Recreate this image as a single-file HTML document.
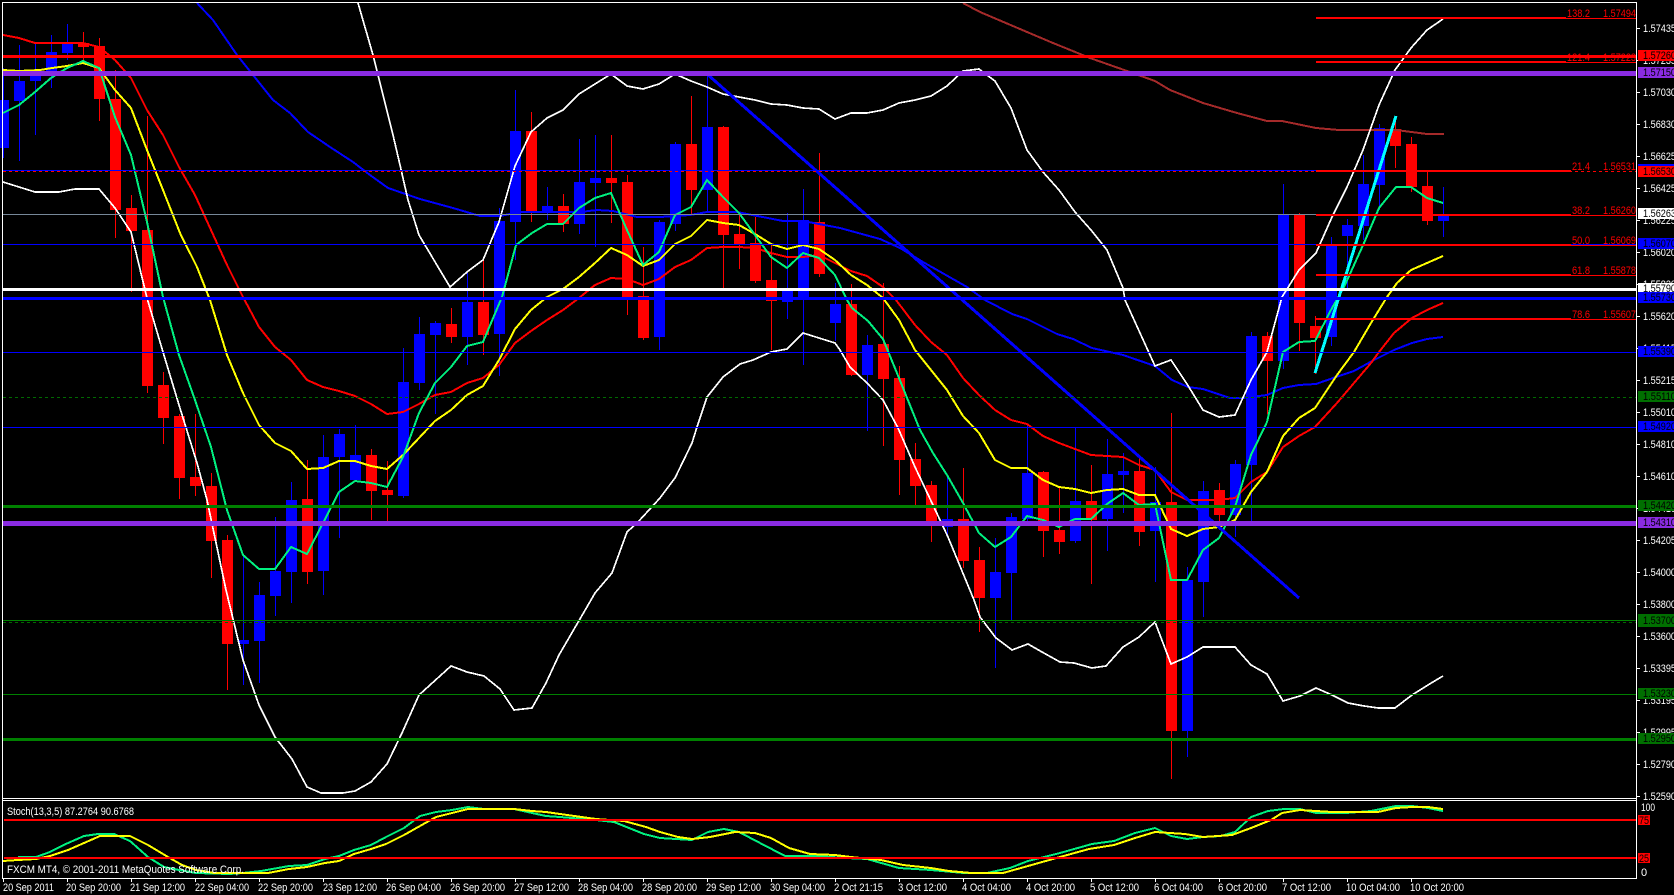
<!DOCTYPE html>
<html><head><meta charset="utf-8"><title>FXCM MT4 chart</title>
<style>
html,body{margin:0;padding:0;background:#000;width:1674px;height:895px;overflow:hidden}
svg{display:block;position:absolute;left:0;top:0}
text{font-family:"Liberation Sans",sans-serif;font-size:11px;fill:#fff;shape-rendering:auto}
.f text{fill:#f00}
.l text{fill:#000}
polyline,path{fill:none}
</style></head><body>
<svg width="1674" height="895" viewBox="0 0 1674 895" shape-rendering="crispEdges">
<rect width="1674" height="895" fill="#000"/>
<!-- wicks -->
<path stroke="#00f" stroke-width="1" d="M3.5 68V158M19.5 45V161M35.5 43V135M51.5 35V88M67.5 24V60M243.5 555V685M259.5 582V683M275.5 517V616M291.5 482V603M323.5 435V595M339.5 429V538M355.5 425V482M403.5 348V498M419.5 317V390M435.5 321V414M467.5 273V365M499.5 208V376M515.5 90V260M547.5 187V220M579.5 139V234M595.5 135V247M659.5 220V350M675.5 142V231M707.5 75V213M787.5 213V319M803.5 189V365M835.5 283V341M867.5 335V431M947.5 475V537M995.5 538V668M1011.5 513V620M1027.5 425V525M1075.5 428V543M1107.5 439V551M1123.5 453V513M1155.5 467V582M1187.5 567V757M1203.5 481V617M1235.5 460V537M1251.5 332V521M1283.5 184V369M1331.5 237V346M1347.5 219V290M1363.5 155V240M1379.5 124V210M1443.5 187V237"/>
<path stroke="#f00" stroke-width="1" d="M83.5 32V60M99.5 38V121M115.5 70V238M131.5 195V292M147.5 116V393M163.5 372V444M179.5 414V499M195.5 414V496M211.5 473V578M227.5 535V690M307.5 460V584M371.5 449V520M387.5 461V522M451.5 308V343M483.5 260V355M531.5 112V222M563.5 194V232M611.5 135V223M627.5 175V315M643.5 247V340M691.5 96V215M723.5 126V288M739.5 213V269M755.5 217V283M771.5 245V350M819.5 153V277M851.5 284V376M883.5 283V446M899.5 366V495M915.5 443V505M931.5 481V542M963.5 468V568M979.5 547V632M1043.5 471V557M1059.5 488V554M1091.5 465V584M1139.5 458V546M1171.5 413V779M1219.5 483V530M1267.5 332V414M1299.5 213V351M1315.5 316V374M1395.5 120V168M1411.5 137V192M1427.5 171V225"/>
<!-- bodies -->
<path stroke="#00f" stroke-width="11" d="M3.5 100V148M19.5 81V101M35.5 70V81M51.5 52V72M67.5 44V53M243.5 640V644M259.5 595V641M275.5 571V596M291.5 500V572M323.5 457V571M339.5 434V457M355.5 455V480M403.5 382V496M419.5 334V383M435.5 323V335M467.5 302V337M499.5 221V334M515.5 131V222M547.5 206V212M579.5 182V224M595.5 178V183M659.5 222V337M675.5 144V224M707.5 127V190M787.5 291V302M803.5 220V298M835.5 304V323M867.5 345V375M947.5 519V527M995.5 572V598M1011.5 517V573M1027.5 473V519M1075.5 501V541M1107.5 474V519M1123.5 471V475M1155.5 502V531M1187.5 580V731M1203.5 491V582M1235.5 464V515M1251.5 336V465M1283.5 215V361M1331.5 245V337M1347.5 225V236M1363.5 184V226M1379.5 128V185M1443.5 216V221"/>
<path stroke="#f00" stroke-width="11" d="M83.5 43V47M99.5 46V99M115.5 99V210M131.5 208V231M147.5 230V386M163.5 385V418M179.5 416V478M195.5 477V486M211.5 486V541M227.5 540V644M307.5 499V572M371.5 455V491M387.5 490V495M451.5 324V337M483.5 302V335M531.5 131V212M563.5 206V224M611.5 178V183M627.5 182V298M643.5 296V338M691.5 144V190M723.5 127V235M739.5 234V244M755.5 243V281M771.5 280V301M819.5 222V274M851.5 304V375M883.5 344V379M899.5 378V460M915.5 459V486M931.5 485V521M963.5 519V561M979.5 560V598M1043.5 472V531M1059.5 530V542M1091.5 501V520M1139.5 471V532M1171.5 502V731M1219.5 490V515M1267.5 336V361M1299.5 215V323M1315.5 326V338M1395.5 129V146M1411.5 144V187M1427.5 186V221"/>
<!-- brown MA -->
<polyline stroke="#a52a2a" stroke-width="2" points="963,3 980,12 1027,32 1053,43 1090,58 1127,71 1155,81 1170,90 1203,103 1237,113 1267,121 1282,121 1316,128 1339,130 1396,130 1427,134 1444,134" />
<!-- blue MA -->
<polyline stroke="#00f" stroke-width="2" points="197,3 213,20 237,55 253,75 273,100 290,113 308,132 330,147 353,162 370,175 388,188 420,199 453,208 480,216 500,216 520,212 580,212 597,210 613,211 637,217 660,217 690,215 707,212 737,212 783,221 803,221 840,228 880,239 900,248 923,262 967,287 985,300 1012,314 1027,319 1057,334 1073,339 1092,348 1123,355 1155,366 1172,380 1188,387 1203,389 1230,398 1243,398 1267,395 1283,388 1299,385 1316,384 1336,377 1354,371 1374,360 1394,350 1412,343 1427,339 1443,337"/>
<!-- red EMA -->
<polyline stroke="#f00" stroke-width="2" points="3,35 19,38 35,43 51,43 67,43 83,43 99,47 115,60 131,78 147,110 163,135 179,167 195,195 211,230 227,265 243,297 259,327 275,347 291,360 307,380 323,387 339,391 355,396 371,404 387,414 403,412 419,404 435,395 451,392 467,383 483,378 499,365 515,343 531,331 547,320 563,310 579,298 595,285 611,278 627,279 643,285 659,279 675,267 691,260 707,248 723,247 739,247 755,248 771,253 787,257 803,257 819,255 835,263 851,271 867,276 883,287 896,300 915,325 931,342 947,355 963,378 979,395 995,410 1011,420 1027,424 1043,436 1059,443 1075,449 1091,455 1107,456 1123,457 1139,465 1155,470 1171,492 1187,500 1203,500 1219,500 1235,498 1251,482 1267,472 1283,447 1299,436 1315,427 1337,403 1354,383 1371,363 1379,352 1394,333 1412,318 1427,310 1443,303"/>
<!-- yellow EMA -->
<polyline stroke="#ff0" stroke-width="2" points="3,70 19,71 40,70 52,68 67,66 83,63 99,68 115,90 131,108 147,150 163,190 180,233 197,267 210,300 227,355 243,393 259,425 275,443 291,451 307,469 323,468 339,461 355,461 371,466 387,469 403,455 419,438 435,421 451,410 467,395 483,386 499,360 515,329 531,310 547,297 563,289 579,277 595,263 611,248 627,255 643,266 659,260 675,244 691,236 707,220 723,223 739,225 755,234 771,244 787,249 803,245 819,249 835,260 851,275 867,285 883,298 899,320 915,350 931,370 947,390 963,416 979,433 995,460 1011,468 1027,468 1043,480 1059,487 1075,489 1091,493 1107,490 1123,489 1139,495 1155,495 1171,529 1187,536 1203,529 1219,527 1235,520 1251,492 1267,472 1283,436 1299,418 1315,408 1337,375 1354,352 1371,323 1387,297 1397,283 1411,270 1427,263 1443,256"/>
<!-- white bands -->
<polyline stroke="#fff" stroke-width="1.7" points="3,182 19,187 35,192 59,192 75,189 99,189 115,208 131,232 147,298 163,352 179,405 197,463 207,500 226,590 243,660 259,705 275,737 292,759 307,787 321,793 343,793 355,791 371,782 387,764 402,733 419,695 451,666 467,672 484,676 500,689 514,710 532,708 546,683 559,655 591,600 595,593 612,573 627,532 638,522 660,498 675,478 692,443 697,427 707,397 723,377 740,364 753,360 771,352 787,349 803,333 835,343 840,350 850,367 867,383 883,400 898,428 915,467 932,503 948,537 974,600 980,617 996,638 1012,650 1028,644 1042,652 1060,662 1074,663 1092,668 1106,666 1123,647 1139,637 1155,622 1171,664 1187,657 1203,647 1235,647 1251,665 1267,674 1283,701 1300,696 1316,688 1332,695 1348,703 1364,706 1378,708 1395,708 1412,695 1428,685 1443,676"/>
<polyline stroke="#fff" stroke-width="1.7" points="358,3 373,55 378,75 393,135 400,165 408,200 419,235 450,287 467,272 483,260 499,222 515,166 531,132 547,118 563,110 579,94 595,84 611,74 627,86 643,89 659,84 675,74 691,81 707,87 723,94 739,97 755,100 771,104 787,105 803,108 819,109 835,119 851,113 867,113 883,110 899,103 915,100 931,96 947,86 963,71 979,69 995,81 1011,108 1027,150 1043,172 1059,190 1075,212 1091,230 1107,250 1123,288 1125,300 1140,333 1155,366 1171,360 1187,384 1203,410 1219,417 1235,415 1251,380 1267,352 1282,297 1299,270 1316,253 1332,217 1347,187 1363,150 1379,105 1395,70 1411,48 1427,30 1443,19"/>
<!-- green EMA -->
<polyline stroke="#00f080" stroke-width="2" points="3,113 19,105 35,92 51,78 67,68 83,61 99,68 115,117 131,155 147,222 163,297 179,355 195,400 211,447 227,510 243,555 259,569 275,569 291,547 307,554 323,523 339,492 355,481 371,483 387,487 403,457 419,413 435,383 451,367 467,346 483,342 502,297 516,245 532,233 547,224 563,224 579,208 595,198 611,193 627,230 643,265 659,252 675,215 691,207 707,180 723,197 739,213 755,235 771,257 787,268 803,253 819,258 835,275 847,300 852,308 868,321 883,339 899,378 920,430 933,453 947,475 963,503 979,533 995,547 1011,537 1027,516 1043,520 1059,527 1075,519 1091,519 1107,504 1123,493 1139,505 1155,504 1171,580 1187,580 1203,550 1219,538 1235,507 1251,455 1267,422 1283,352 1299,342 1315,341 1331,310 1344,287 1364,243 1379,208 1396,187 1411,187 1427,198 1443,203"/>
<!-- trend lines -->
<path stroke="#00f" stroke-width="3" d="M707 74L1299 598"/>
<path stroke="#0ff" stroke-width="3" d="M1315 373L1396 116"/>
<!-- horizontal lines -->
<path stroke="#f00" stroke-width="3" d="M3 56.5H1636"/>
<path stroke="#8a2be2" stroke-width="5" d="M3 73.5H1636M3 523.5H1636"/>
<path stroke="#00f" stroke-width="1" d="M3 170.5H1316M3 244.5H1636M3 352.5H1636M3 427.5H1636"/>
<path stroke="#f00" stroke-width="1" stroke-dasharray="3 3" d="M3 171.5H1636"/>
<path stroke="#778899" stroke-width="1" d="M3 214.5H1320"/>
<path stroke="#fff" stroke-width="3" d="M3 289.5H1636"/>
<path stroke="#00f" stroke-width="3" d="M3 298.5H1636"/>
<path stroke="#006a00" stroke-width="1" stroke-dasharray="3 3" d="M3 397.5H1636M3 622.5H1636"/>
<path stroke="#008000" stroke-width="3" d="M3 506.5H1636M3 739.5H1636"/>
<path stroke="#008000" stroke-width="1" d="M3 620.5H1636M3 694.5H1636"/>
<!-- fib -->
<path stroke="#f00" stroke-width="2" d="M1316 18H1566M1316 62H1566M1316 171H1571M1316 215H1571M1316 245H1571M1316 275H1571M1316 319H1571"/>
<path stroke="#f00" stroke-width="1" d="M1566 18.5H1636M1566 62.5H1636M1571 215.5H1636M1571 245.5H1636M1571 275.5H1636M1571 319.5H1636"/>
<g class="f">
<text x="1567" y="17" textLength="23" lengthAdjust="spacingAndGlyphs">138.2</text><text x="1603" y="17" textLength="33" lengthAdjust="spacingAndGlyphs">1.57494</text>
<text x="1567" y="61" textLength="23" lengthAdjust="spacingAndGlyphs">121.4</text><text x="1603" y="61" textLength="33" lengthAdjust="spacingAndGlyphs">1.57223</text>
<text x="1572" y="170" textLength="18" lengthAdjust="spacingAndGlyphs">21.4</text><text x="1603" y="170" textLength="33" lengthAdjust="spacingAndGlyphs">1.56531</text>
<text x="1572" y="214" textLength="18" lengthAdjust="spacingAndGlyphs">38.2</text><text x="1603" y="214" textLength="33" lengthAdjust="spacingAndGlyphs">1.56260</text>
<text x="1572" y="244" textLength="18" lengthAdjust="spacingAndGlyphs">50.0</text><text x="1603" y="244" textLength="33" lengthAdjust="spacingAndGlyphs">1.56069</text>
<text x="1572" y="274" textLength="18" lengthAdjust="spacingAndGlyphs">61.8</text><text x="1603" y="274" textLength="33" lengthAdjust="spacingAndGlyphs">1.55878</text>
<text x="1572" y="318" textLength="18" lengthAdjust="spacingAndGlyphs">78.6</text><text x="1603" y="318" textLength="33" lengthAdjust="spacingAndGlyphs">1.55607</text>
</g>
<!-- stochastic -->
<polyline stroke="#00f080" stroke-width="2" points="18,857 36,857 50,852 68,843 84,836 98,834 114,834 130,841 148,857 164,867 179,870 196,873 229,874 243,873 261,871 289,866 307,865 325,859 339,856 354,850 371,845 386,837 404,828 420,816 436,812 452,810 468,807 484,809 514,809 532,813 546,816 560,817 596,820 614,822 644,834 660,838 692,840 708,832 724,829 739,832 760,843 785,856 817,856 846,858 867,859 899,868 931,870 964,873 987,873 1010,868 1028,861 1060,853 1092,844 1114,841 1135,833 1155,828 1171,836 1187,839 1203,837 1221,836 1235,832 1251,817 1268,811 1284,809 1300,809 1316,813 1346,813 1371,811 1396,806 1412,806 1428,808 1443,811"/>
<polyline stroke="#ff0" stroke-width="2" points="3,861 18,860 36,859 50,856 68,850 84,843 100,836 114,836 130,836 148,845 168,857 182,865 196,870 214,873 243,873 268,873 289,869 307,867 325,863 339,861 354,854 371,849 386,844 404,835 420,826 436,817 452,813 468,809 484,809 514,809 532,811 546,812 560,814 596,819 624,821 646,827 660,832 678,837 692,839 710,837 735,832 755,833 771,838 789,848 810,854 835,855 851,857 881,860 903,865 931,868 949,871 971,873 1003,873 1028,866 1060,857 1089,849 1114,845 1135,838 1155,832 1185,834 1203,837 1232,835 1251,828 1271,820 1282,813 1300,810 1332,812 1378,812 1396,808 1412,807 1428,807 1443,809"/>
<path stroke="#f00" stroke-width="2" d="M4 820H1636M4 858H1636"/>
<!-- frame -->
<path stroke="#fff" stroke-width="1" d="M2.5 2V879M2 2.5H1637M2 798.5H1637M2 800.5H1637M2 878.5H1637M1636.5 2V879"/>
<path stroke="#fff" stroke-width="1" d="M1637 28.5h3M1637 60.5h3M1637 92.5h3M1637 124.5h3M1637 156.5h3M1637 188.5h3M1637 220.5h3M1637 252.5h3M1637 284.5h3M1637 316.5h3M1637 348.5h3M1637 380.5h3M1637 412.5h3M1637 444.5h3M1637 476.5h3M1637 508.5h3M1637 540.5h3M1637 572.5h3M1637 604.5h3M1637 636.5h3M1637 668.5h3M1637 700.5h3M1637 732.5h3M1637 764.5h3M1637 796.5h3M3.5 879v3M67.5 879v3M131.5 879v3M195.5 879v3M259.5 879v3M323.5 879v3M387.5 879v3M451.5 879v3M515.5 879v3M579.5 879v3M643.5 879v3M707.5 879v3M771.5 879v3M835.5 879v3M899.5 879v3M963.5 879v3M1027.5 879v3M1091.5 879v3M1155.5 879v3M1219.5 879v3M1283.5 879v3M1347.5 879v3M1411.5 879v3"/>
<!-- price axis -->
<g>
<text x="1643" y="32" textLength="33" lengthAdjust="spacingAndGlyphs">1.57435</text>
<text x="1643" y="64" textLength="33" lengthAdjust="spacingAndGlyphs">1.57235</text>
<text x="1643" y="96" textLength="33" lengthAdjust="spacingAndGlyphs">1.57030</text>
<text x="1643" y="128" textLength="33" lengthAdjust="spacingAndGlyphs">1.56830</text>
<text x="1643" y="160" textLength="33" lengthAdjust="spacingAndGlyphs">1.56625</text>
<text x="1643" y="192" textLength="33" lengthAdjust="spacingAndGlyphs">1.56425</text>
<text x="1643" y="224" textLength="33" lengthAdjust="spacingAndGlyphs">1.56225</text>
<text x="1643" y="256" textLength="33" lengthAdjust="spacingAndGlyphs">1.56020</text>
<text x="1643" y="288" textLength="33" lengthAdjust="spacingAndGlyphs">1.55820</text>
<text x="1643" y="320" textLength="33" lengthAdjust="spacingAndGlyphs">1.55620</text>
<text x="1643" y="352" textLength="33" lengthAdjust="spacingAndGlyphs">1.55415</text>
<text x="1643" y="384" textLength="33" lengthAdjust="spacingAndGlyphs">1.55215</text>
<text x="1643" y="416" textLength="33" lengthAdjust="spacingAndGlyphs">1.55010</text>
<text x="1643" y="448" textLength="33" lengthAdjust="spacingAndGlyphs">1.54810</text>
<text x="1643" y="480" textLength="33" lengthAdjust="spacingAndGlyphs">1.54610</text>
<text x="1643" y="512" textLength="33" lengthAdjust="spacingAndGlyphs">1.54410</text>
<text x="1643" y="544" textLength="33" lengthAdjust="spacingAndGlyphs">1.54205</text>
<text x="1643" y="576" textLength="33" lengthAdjust="spacingAndGlyphs">1.54000</text>
<text x="1643" y="608" textLength="33" lengthAdjust="spacingAndGlyphs">1.53800</text>
<text x="1643" y="640" textLength="33" lengthAdjust="spacingAndGlyphs">1.53600</text>
<text x="1643" y="672" textLength="33" lengthAdjust="spacingAndGlyphs">1.53395</text>
<text x="1643" y="704" textLength="33" lengthAdjust="spacingAndGlyphs">1.53195</text>
<text x="1643" y="736" textLength="33" lengthAdjust="spacingAndGlyphs">1.52995</text>
<text x="1643" y="768" textLength="33" lengthAdjust="spacingAndGlyphs">1.52790</text>
<text x="1643" y="800" textLength="33" lengthAdjust="spacingAndGlyphs">1.52590</text>
<text x="1641" y="811" textLength="14" lengthAdjust="spacingAndGlyphs">100</text>
<text x="1641" y="876">0</text>
</g>
<!-- price labels -->
<rect x="1638" y="50" width="36" height="11" fill="#f00"/>
<rect x="1638" y="166" width="36" height="11" fill="#f00"/><rect x="1638" y="164" width="36" height="2" fill="#00f"/>
<rect x="1638" y="67" width="36" height="11" fill="#8a2be2"/>
<rect x="1638" y="208" width="36" height="11" fill="#fff"/>
<rect x="1638" y="238" width="36" height="11" fill="#00f"/>
<rect x="1638" y="283" width="36" height="9" fill="#fff"/>
<rect x="1638" y="292" width="36" height="11" fill="#00f"/>
<rect x="1638" y="346" width="36" height="11" fill="#00f"/>
<rect x="1638" y="391" width="36" height="11" fill="#006f00"/>
<rect x="1638" y="421" width="36" height="11" fill="#00f"/>
<rect x="1638" y="500" width="36" height="11" fill="#006f00"/>
<rect x="1638" y="517" width="36" height="11" fill="#8a2be2"/>
<rect x="1638" y="614" width="36" height="13" fill="#006f00"/>
<rect x="1638" y="688" width="36" height="11" fill="#006f00"/>
<rect x="1638" y="733" width="36" height="11" fill="#006f00"/>
<rect x="1638" y="815" width="12" height="10" fill="#f00"/>
<rect x="1638" y="853" width="12" height="10" fill="#f00"/>
<g class="l">
<text x="1643" y="59" textLength="33" lengthAdjust="spacingAndGlyphs">1.57260</text>
<text x="1643" y="76" textLength="33" lengthAdjust="spacingAndGlyphs">1.57150</text>
<text x="1643" y="175" textLength="33" lengthAdjust="spacingAndGlyphs">1.56530</text>
<text x="1643" y="217" textLength="33" lengthAdjust="spacingAndGlyphs">1.56263</text>
<text x="1643" y="247" textLength="33" lengthAdjust="spacingAndGlyphs">1.56070</text>
<text x="1643" y="292" textLength="33" lengthAdjust="spacingAndGlyphs">1.55790</text>
<text x="1643" y="301" textLength="33" lengthAdjust="spacingAndGlyphs">1.55730</text>
<text x="1643" y="355" textLength="33" lengthAdjust="spacingAndGlyphs">1.55390</text>
<text x="1643" y="400" textLength="33" lengthAdjust="spacingAndGlyphs">1.55110</text>
<text x="1643" y="430" textLength="33" lengthAdjust="spacingAndGlyphs">1.54920</text>
<text x="1643" y="509" textLength="33" lengthAdjust="spacingAndGlyphs">1.54420</text>
<text x="1643" y="526" textLength="33" lengthAdjust="spacingAndGlyphs">1.54310</text>
<text x="1643" y="624" textLength="33" lengthAdjust="spacingAndGlyphs">1.53700</text>
<text x="1643" y="697" textLength="33" lengthAdjust="spacingAndGlyphs">1.53230</text>
<text x="1643" y="742" textLength="33" lengthAdjust="spacingAndGlyphs">1.52950</text>
<text x="1639" y="824" textLength="10" lengthAdjust="spacingAndGlyphs">75</text>
<text x="1639" y="862" textLength="10" lengthAdjust="spacingAndGlyphs">25</text>
</g>
<!-- chart labels -->
<text x="7" y="815" textLength="127" lengthAdjust="spacingAndGlyphs">Stoch(13,3,5) 87.2764 90.6768</text>
<text x="7" y="873" textLength="237" lengthAdjust="spacingAndGlyphs">FXCM MT4, © 2001-2011 MetaQuotes Software Corp.</text>
<!-- time axis -->
<text x="3" y="891" textLength="51" lengthAdjust="spacingAndGlyphs">20 Sep 2011</text>
<text x="66" y="891" textLength="55" lengthAdjust="spacingAndGlyphs">20 Sep 20:00</text>
<text x="130" y="891" textLength="55" lengthAdjust="spacingAndGlyphs">21 Sep 12:00</text>
<text x="195" y="891" textLength="54" lengthAdjust="spacingAndGlyphs">22 Sep 04:00</text>
<text x="258" y="891" textLength="55" lengthAdjust="spacingAndGlyphs">22 Sep 20:00</text>
<text x="323" y="891" textLength="54" lengthAdjust="spacingAndGlyphs">23 Sep 12:00</text>
<text x="386" y="891" textLength="55" lengthAdjust="spacingAndGlyphs">26 Sep 04:00</text>
<text x="450" y="891" textLength="55" lengthAdjust="spacingAndGlyphs">26 Sep 20:00</text>
<text x="514" y="891" textLength="55" lengthAdjust="spacingAndGlyphs">27 Sep 12:00</text>
<text x="578" y="891" textLength="55" lengthAdjust="spacingAndGlyphs">28 Sep 04:00</text>
<text x="642" y="891" textLength="55" lengthAdjust="spacingAndGlyphs">28 Sep 20:00</text>
<text x="706" y="891" textLength="55" lengthAdjust="spacingAndGlyphs">29 Sep 12:00</text>
<text x="770" y="891" textLength="55" lengthAdjust="spacingAndGlyphs">30 Sep 04:00</text>
<text x="834" y="891" textLength="49" lengthAdjust="spacingAndGlyphs">2 Oct 21:15</text>
<text x="898" y="891" textLength="49" lengthAdjust="spacingAndGlyphs">3 Oct 12:00</text>
<text x="962" y="891" textLength="49" lengthAdjust="spacingAndGlyphs">4 Oct 04:00</text>
<text x="1026" y="891" textLength="49" lengthAdjust="spacingAndGlyphs">4 Oct 20:00</text>
<text x="1090" y="891" textLength="49" lengthAdjust="spacingAndGlyphs">5 Oct 12:00</text>
<text x="1154" y="891" textLength="49" lengthAdjust="spacingAndGlyphs">6 Oct 04:00</text>
<text x="1218" y="891" textLength="49" lengthAdjust="spacingAndGlyphs">6 Oct 20:00</text>
<text x="1282" y="891" textLength="49" lengthAdjust="spacingAndGlyphs">7 Oct 12:00</text>
<text x="1346" y="891" textLength="54" lengthAdjust="spacingAndGlyphs">10 Oct 04:00</text>
<text x="1410" y="891" textLength="54" lengthAdjust="spacingAndGlyphs">10 Oct 20:00</text>
</svg>
</body></html>
